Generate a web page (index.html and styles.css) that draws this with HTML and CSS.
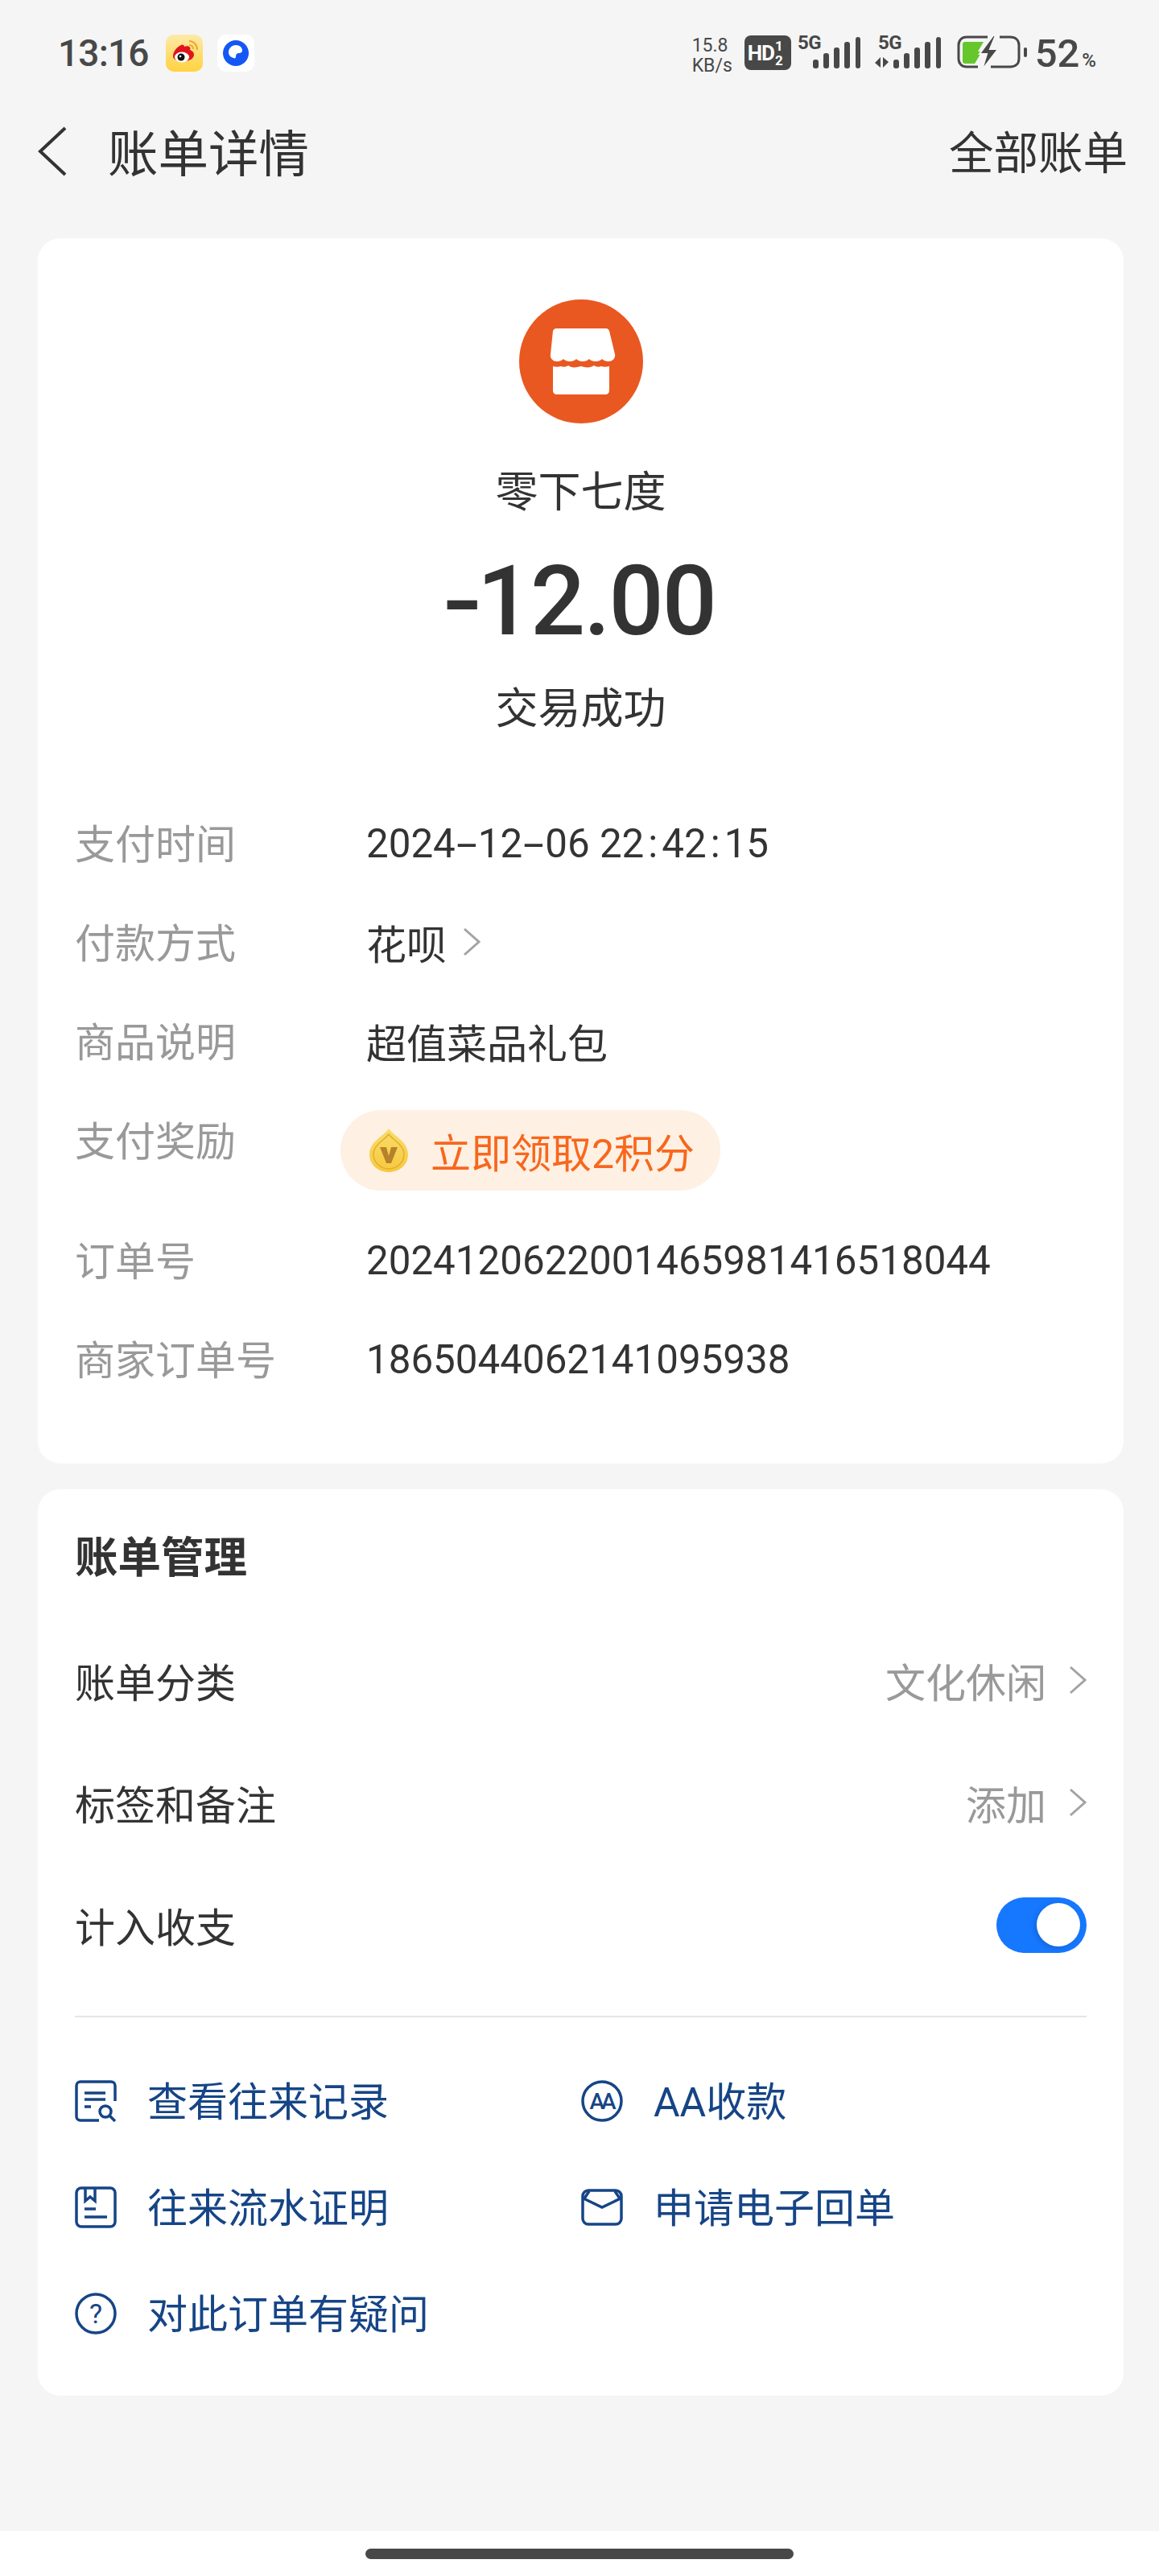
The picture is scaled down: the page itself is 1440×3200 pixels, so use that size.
FILE: index.html
```html
<!DOCTYPE html>
<html lang="zh-CN">

<head>
    <meta charset="UTF-8">
    <meta name="viewport" content="width=device-width, initial-scale=1.0">
    <title>账单详情</title>
    <link rel="stylesheet" href="styles.css">
</head>

<body>

    <div class="status-bar">
        <span class="time">13:16</span>
        <svg class="app-icon" viewBox="0 0 46 46">
            <defs>
                <linearGradient id="wbBg" x1="0" y1="0" x2="0" y2="1">
                    <stop offset="0" stop-color="#fdeaa8" />
                    <stop offset="1" stop-color="#ffd23f" />
                </linearGradient>
            </defs>
            <rect width="46" height="46" rx="10" fill="url(#wbBg)" />
            <path d="M9 27c0-6 5-12 10-14 2-1 4 0 4 2 3-1 6-1 7 1 1 1 0 3 0 3 3 1 5 3 5 6 0 5-6 8-13 8S9 31 9 27z" fill="#e0141c" />
            <ellipse cx="20" cy="28" rx="9" ry="6.5" fill="#fff" />
            <circle cx="19" cy="28" r="4.5" fill="#111" />
            <circle cx="18" cy="27" r="1.3" fill="#fff" />
            <path d="M29 13c3 0 5 2 5 5M29 8c6 0 10 5 10 11" fill="none" stroke="#f2a530" stroke-width="2" />
        </svg>
        <svg class="app-icon" viewBox="0 0 46 46">
            <rect width="46" height="46" rx="11" fill="#fff" />
            <ellipse cx="23" cy="23" rx="16" ry="16" fill="#1557f5" />
            <path d="M14 22c0-5 4-9 9-9 5 0 8 3 8 7 0 2-2 3-4 3-3 0-4 2-4 4 0 2-1 3-3 2-3-1-6-3-6-7z" fill="#fff" />
        </svg>

        <div class="status-right">
            <div class="speed"><span>15.8</span><span>KB/s</span></div>
            <div class="hd-badge">HD<span class="hd-nums"><i>1</i><i>2</i></span></div>
            <svg class="signal" width="79" height="52" viewBox="0 -6 79 52">
                <text class="sig-text" x="0" y="18">5G</text>
                <rect x="19" y="31" width="7" height="11" rx="3" />
                <rect x="32" y="23" width="7" height="19" rx="3" />
                <rect x="45" y="16" width="7" height="26" rx="3" />
                <rect x="58" y="9" width="7" height="33" rx="3" />
                <rect x="72" y="3" width="6" height="39" rx="3" />
            </svg>
            <svg class="signal" width="84" height="52" viewBox="0 -6 84 52">
                <text class="sig-text" x="5" y="18">5G</text>
                <path d="M8 28v13l-7-6zM11 41V28l7 6z" />
                <rect x="24" y="31" width="7" height="11" rx="3" />
                <rect x="37" y="23" width="7" height="19" rx="3" />
                <rect x="50" y="16" width="7" height="26" rx="3" />
                <rect x="63" y="9" width="7" height="33" rx="3" />
                <rect x="77" y="3" width="6" height="39" rx="3" />
            </svg>
            <svg class="battery" width="87" height="46" viewBox="0 0 87 46">
                <path d="M26 40H12C6 40 2 36 2 30V13C2 7 6 3 12 3h26M53 3h13c7 0 11 4 11 10v17c0 6-4 10-11 10H42" fill="none" stroke="#484848" stroke-width="3" />
                <path d="M10 9h23l-7 12h5L22 36H10c-2 0-3-1-3-3V12c0-2 1-3 3-3z" fill="#65c72b" />
                <path d="M45 1L28 24h9l-6 20 20-26h-10l7-17z" fill="#484848" stroke="#f6f6f6" stroke-width="2" />
                <rect x="83" y="16" width="4" height="12" rx="2" fill="#484848" />
            </svg>
            <div class="battery-num">52<span>%</span></div>
        </div>
    </div>

    <div class="nav-bar">
        <svg class="back" width="38" height="62" viewBox="0 0 38 62">
            <path d="M35 2L4 31l31 29" fill="none" stroke="#333" stroke-width="4" />
        </svg>
        <div class="nav-title">账单详情</div>
        <div class="nav-link">全部账单</div>
    </div>

    <div class="card card-detail">
        <div class="merchant">
            <div class="merchant-logo">
                <svg width="86" height="86" viewBox="0 0 86 86">
                    <path d="M12 2h62c2 0 3 1 4 3l7 29c1 5-3 9-8 9-3 0-6-1-8-3-2 2-5 3-8 3s-6-1-8-3c-2 2-5 3-8 3s-6-1-8-3c-2 2-5 3-8 3s-6-1-8-3c-2 2-5 3-8 3-5 0-9-4-8-9L8 5c1-2 2-3 4-3z" fill="#fff" />
                    <path d="M8 49c3 1 7 1 10 0 3 1 6 1 9-1 4 3 8 3 16 1 6 2 12 2 16-1 3 2 6 2 9 1 3 1 6 1 10 0v30c0 3-2 5-5 5H13c-3 0-5-2-5-5z" fill="#fff" />
                </svg>
            </div>
            <div class="merchant-name">零下七度</div>
            <div class="amount"><span class="amount-dash">-</span>12.00</div>
            <div class="trade-status">交易成功</div>
        </div>

        <div class="info-row">
            <span class="info-label">支付时间</span>
            <span class="info-value num">2024<span class="dash">-</span>12<span class="dash">-</span>06 22<span class="colon">:</span>42<span class="colon">:</span>15</span>
        </div>
        <div class="info-row">
            <span class="info-label">付款方式</span>
            <span class="info-value">花呗
                <svg class="chevron chevron-sm" viewBox="0 0 22 36"><path d="M2 2l18 16L2 34" /></svg>
            </span>
        </div>
        <div class="info-row"><span class="info-label">商品说明</span><span class="info-value">超值菜品礼包</span></div>
        <div class="info-row reward-row">
            <span class="info-label">支付奖励</span>
            <div class="reward-pill">
                <svg class="coin" width="50" height="56" viewBox="0 0 50 56">
                    <defs>
                        <linearGradient id="coinBg" x1="0" y1="0" x2="0" y2="1">
                            <stop offset="0" stop-color="#f9dc6a" />
                            <stop offset="1" stop-color="#f6c93f" />
                        </linearGradient>
                    </defs>
                    <path d="M25 1c6 9 24 16 24 32 0 13-11 22-24 22S1 46 1 33C1 17 19 10 25 1z" fill="url(#coinBg)" />
                    <path d="M25 8c5 7 19 13 19 25 0 10-9 18-19 18S6 43 6 33C6 21 20 15 25 8z" fill="none" stroke="#e4ae2c" stroke-width="1.5" />
                    <path d="M14 24h8l3 11 3-11h8l-8 20h-6z" fill="#b5822a" />
                </svg>
                <span>立即领取2积分</span>
            </div>
        </div>
        <div class="info-row"><span class="info-label">订单号</span><span class="info-value num">2024120622001465981416518044</span></div>
        <div class="info-row"><span class="info-label">商家订单号</span><span class="info-value num">1865044062141095938</span></div>
    </div>

    <div class="card card-manage">
        <div class="manage-title">账单管理</div>
        <div class="manage-row">
            <span>账单分类</span>
            <span class="manage-value">文化休闲
                <svg class="chevron" viewBox="0 0 22 36"><path d="M2 2l18 16L2 34" /></svg>
            </span>
        </div>
        <div class="manage-row">
            <span>标签和备注</span>
            <span class="manage-value">添加
                <svg class="chevron" viewBox="0 0 22 36"><path d="M2 2l18 16L2 34" /></svg>
            </span>
        </div>
        <div class="manage-row">
            <span>计入收支</span>
            <div class="toggle"><div class="toggle-knob"></div></div>
        </div>

        <div class="links">
            <div class="link-item">
                <svg class="link-icon" viewBox="0 0 52 52">
                    <path d="M50 26V7c0-3-2-5-5-5H7C4 2 2 4 2 7v38c0 3 2 5 5 5h23" />
                    <path d="M12 16h26M12 24h26M12 33h8" />
                    <circle cx="38" cy="39" r="7" />
                    <path d="M43 44l7 7" />
                </svg>
                <span>查看往来记录</span>
            </div>
            <div class="link-item">
                <svg class="link-icon" viewBox="0 0 52 52">
                    <circle cx="26" cy="26" r="24" />
                    <text class="aa-text" x="25" y="36">AA</text>
                </svg>
                <span>AA收款</span>
            </div>
            <div class="link-item">
                <svg class="link-icon" viewBox="0 0 52 52">
                    <rect x="2" y="2" width="48" height="48" rx="6" />
                    <path d="M13 2v16l6-5 6 5V2M12 28h14M12 38h28" />
                </svg>
                <span>往来流水证明</span>
            </div>
            <div class="link-item">
                <svg class="link-icon" viewBox="0 0 52 46">
                    <rect x="2" y="2" width="48" height="42" rx="7" />
                    <path d="M3 12l23 11 23-11M4 12l6-9M48 12l-6-9" />
                </svg>
                <span>申请电子回单</span>
            </div>
            <div class="link-item">
                <svg class="link-icon" viewBox="0 0 52 52">
                    <circle cx="26" cy="26" r="24" />
                    <text class="help-text" x="26" y="38">?</text>
                </svg>
                <span>对此订单有疑问</span>
            </div>
        </div>
    </div>

    <div class="home-area">
        <div class="home-bar"></div>
    </div>

</body>

</html>
```

FILE: styles.css
```css
* {
    margin: 0;
    padding: 0;
    box-sizing: border-box;
}

body {
    width: 1440px;
    height: 3200px;
    overflow: hidden;
    display: flex;
    flex-direction: column;
    background-color: #f5f5f5;
    color: #333;
    font-family: Roboto, "Noto Sans CJK SC", sans-serif;
    font-size: 50px;
}

/* status bar */
.status-bar {
    height: 130px;
    padding: 43px 78px 0 72px;
    display: flex;
    align-items: flex-start;
    color: #484848;
}

.time {
    width: 134px;
    height: 46px;
    font-size: 46px;
    line-height: 46px;
    letter-spacing: -0.8px;
    font-weight: 500;
}

.app-icon {
    width: 46px;
    height: 46px;
    margin-right: 18px;
}

.status-right {
    margin-left: auto;
    display: flex;
    align-items: flex-start;
}

.speed {
    width: 65px;
    display: flex;
    flex-direction: column;
    margin-top: 1px;
    font-size: 23px;
    line-height: 25px;
}

.hd-badge {
    width: 58px;
    height: 43px;
    margin-top: 1px;
    margin-right: 8px;
    padding-left: 4px;
    display: flex;
    align-items: center;
    border-radius: 8px;
    background: #484848;
    color: #fff;
    font-size: 26px;
    font-weight: 700;
    letter-spacing: -1px;
}

.hd-nums {
    display: flex;
    flex-direction: column;
    margin-left: 1px;
    font-size: 17px;
    line-height: 18px;
}

.hd-nums i {
    font-style: normal;
}

.signal {
    margin-top: -6px;
    margin-right: 16px;
    fill: #484848;
}

.signal:nth-of-type(2) {
    margin-right: 19px;
}

.sig-text {
    font-size: 24px;
    font-weight: 700;
    letter-spacing: -0.5px;
}

.battery {
    margin-right: 10px;
}

.battery-num {
    font-size: 49px;
    line-height: 46px;
    margin-top: 1px;
    font-weight: 500;
}

.battery-num span {
    font-size: 24px;
    margin-left: 3px;
}

/* title row */
.nav-bar {
    height: 120px;
    padding: 0 39px 0 46px;
    display: flex;
    align-items: center;
}

.back {
    margin-right: 50px;
    margin-bottom: 4px;
}

.nav-title {
    font-size: 62.5px;
    margin-bottom: 8px;
}

.nav-link {
    margin-left: auto;
    margin-bottom: 8px;
    font-size: 55.5px;
}

/* cards */
.card {
    width: 1349px;
    margin-left: 47px;
    border-radius: 28px;
    background: #fff;
}

.card-detail {
    margin-top: 46px;
    height: 1522px;
    padding: 76px 46px 0;
}

.card-manage {
    margin-top: 32px;
    height: 1126px;
    padding: 0 46px;
}

.merchant {
    height: 612px;
    display: flex;
    flex-direction: column;
    align-items: center;
}

.merchant-logo {
    width: 154px;
    height: 154px;
    border-radius: 50%;
    background: #e95820;
    display: flex;
    align-items: center;
    justify-content: center;
}

.merchant-name {
    margin-top: 56px;
    font-size: 53px;
    line-height: 60px;
}

.amount {
    margin-top: 45px;
    font-size: 120px;
    line-height: 120px;
    font-weight: 500;
    letter-spacing: -2px;
}

.amount-dash {
    display: inline-block;
    transform: scaleX(1.2);
}

.trade-status {
    margin-top: 44px;
    font-size: 53px;
    line-height: 60px;
}

.info-row {
    height: 123px;
    display: flex;
    align-items: center;
}

.info-label {
    width: 362px;
    margin-bottom: 1px;
    color: #999;
}

.info-value {
    display: flex;
    align-items: center;
    margin-top: 3px;
}

.num {
    display: block;
    margin-top: 5px;
    font-size: 49.3px;
    white-space: pre;
}

.dash {
    display: inline-block;
    width: 28px;
    text-align: center;
    transform: scaleX(1.9);
}

.colon {
    margin: 0 5px;
}

.chevron {
    width: 22px;
    height: 36px;
    fill: none;
    stroke: #a3a3a3;
    stroke-width: 3;
}

.chevron-sm {
    margin-left: 20px;
}

.reward-row {
    height: 148.5px;
    align-items: flex-start;
}

.reward-row .info-label {
    margin-top: 25px;
}

.reward-pill {
    height: 100px;
    width: 472px;
    margin-top: 25.5px;
    margin-left: -32px;
    padding-left: 35px;
    display: flex;
    align-items: center;
    border-radius: 50px;
    background: #fef0e3;
    color: #f8671c;
}

.coin {
    margin-right: 27px;
}

/* bill management */
.manage-title {
    padding-top: 56px;
    height: 161px;
    font-size: 53.5px;
    line-height: 60px;
    font-weight: 700;
}

.manage-row {
    height: 152px;
    display: flex;
    align-items: center;
    justify-content: space-between;
}

.manage-value {
    display: flex;
    align-items: center;
    gap: 28px;
    color: #999;
}

.toggle {
    width: 112px;
    height: 69px;
    padding-left: 50px;
    padding-top: 7px;
    border-radius: 35px;
    background: #1677ff;
}

.toggle-knob {
    width: 54px;
    height: 54px;
    border-radius: 50%;
    background: #fff;
    box-shadow: -2px 2px 6px rgba(0, 0, 0, 0.15);
}

.links {
    margin-top: 37px;
    padding-top: 38px;
    border-top: 2px solid #e6e6e6;
    display: grid;
    grid-template-columns: 629px 1fr;
    grid-auto-rows: 132px;
    color: #164586;
}

.link-item {
    display: flex;
    align-items: center;
}

.link-item span {
    margin-bottom: 6px;
}

.link-icon {
    width: 52px;
    height: 52px;
    margin-right: 38px;
    fill: none;
    stroke: #164586;
    stroke-width: 3.5;
}

.aa-text {
    font-size: 28px;
    font-weight: 500;
    letter-spacing: -4px;
    text-anchor: middle;
    fill: #164586;
    stroke: none;
}

.help-text {
    font-size: 34px;
    text-anchor: middle;
    fill: #164586;
    stroke: none;
}

/* gesture bar */
.home-area {
    margin-top: auto;
    height: 56px;
    padding-top: 22px;
    background: #fff;
}

.home-bar {
    width: 532px;
    height: 13px;
    margin: 0 auto;
    border-radius: 7px;
    background: #484848;
}
```
